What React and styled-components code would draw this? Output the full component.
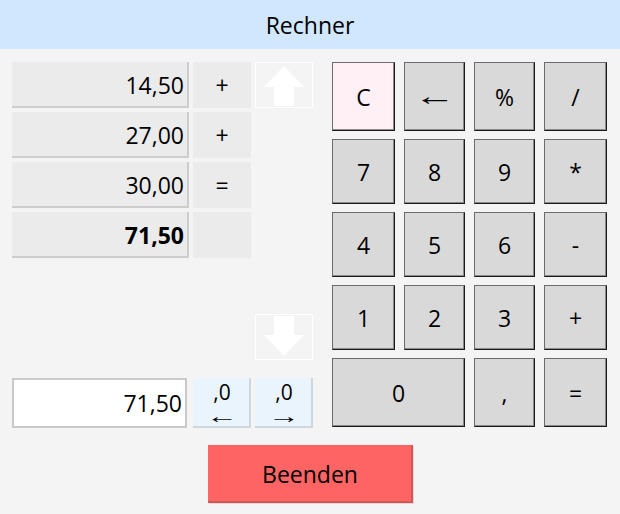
import React from 'react';
import styled, { createGlobalStyle } from 'styled-components';

const GlobalStyle = createGlobalStyle`
  html, body {
    margin: 0;
    padding: 0;
    background: #f4f4f4;
  }
  body {
    font-family: "Open Sans", "Noto Sans", "Liberation Sans", sans-serif;
    color: #000;
  }
`;

const Window = styled.div`
  width: 620px;
  height: 514px;
  display: flex;
  flex-direction: column;
  background: #f4f4f4;
`;

const Header = styled.div`
  height: 49px;
  background: #d1e7fd;
  display: flex;
  align-items: center;
  justify-content: center;
  font-size: 23px;
`;

const Body = styled.div`
  display: flex;
  gap: 19px;
  padding: 13px 12px 0 12px;
`;

const LeftPanel = styled.div`
  display: grid;
  grid-template-columns: 177px 58px 58px;
  grid-template-rows: 46px 46px 46px 46px 48px 46px 10px 50px;
  column-gap: 4px;
  row-gap: 4px;
`;

const ValueCell = styled.div`
  grid-column: 1;
  background: #ebebeb;
  box-shadow: inset -2px -2px 0 #cdcdcd;
  display: flex;
  align-items: center;
  justify-content: flex-end;
  padding-right: 5px;
  font-size: 23px;
  font-weight: ${(p) => (p.$bold ? 700 : 400)};
`;

const OpCell = styled.div`
  grid-column: 2;
  background: #ebebeb;
  display: flex;
  align-items: center;
  justify-content: center;
  font-size: 23px;
`;

const ArrowBox = styled.div`
  grid-column: 3;
  grid-row: ${(p) => p.$row};
  border: 1px solid #ffffff;
  display: flex;
  align-items: center;
  justify-content: center;
`;

const Display = styled.div`
  grid-column: 1;
  grid-row: 8;
  width: 175px;
  box-sizing: border-box;
  background: #fff;
  border: 2px solid #c9c9c9;
  display: flex;
  align-items: center;
  justify-content: flex-end;
  padding-right: 3px;
  font-size: 23px;
`;

const RoundButton = styled.div`
  grid-row: 8;
  grid-column: ${(p) => p.$col};
  background: #eaf4fd;
  box-shadow: inset -2px -2px 0 #cfd6dc;
  display: flex;
  flex-direction: column;
  align-items: center;
  justify-content: flex-start;
  gap: 8px;
  padding-top: 4px;
`;

const RoundLabel = styled.span`
  font-size: 21px;
  line-height: 20px;
`;

const ThinArrow = styled.span`
  display: inline-block;
  font-family: "Liberation Sans", sans-serif;
  font-size: ${(p) => p.$size}px;
  line-height: ${(p) => p.$size * 0.6}px;
  transform: scaleX(1.6);
`;

const Keypad = styled.div`
  display: grid;
  grid-template-columns: 63px 61px 61px 63px;
  grid-template-rows: 69px 65px 65px 65px 69px;
  column-gap: 9px;
  row-gap: 8px;
`;

const Key = styled.button`
  grid-column: span ${(p) => p.$span || 1};
  margin: 0;
  padding: 0;
  font-family: inherit;
  font-size: 23px;
  color: #000;
  background: ${(p) => (p.$clear ? '#fff0f5' : '#d9d9d9')};
  border: 1px solid #6c6c6c;
  border-right-color: #1a1a1a;
  border-bottom-color: #1a1a1a;
  box-shadow: inset -1px -1px 0 #8a8a8a;
  display: flex;
  align-items: center;
  justify-content: center;
`;

const Footer = styled.div`
  display: flex;
  justify-content: center;
  padding-top: 17px;
`;

const QuitButton = styled.button`
  width: 205px;
  height: 58px;
  margin: 0;
  border: none;
  background: #ff6464;
  box-shadow: inset -2px -2px 0 #d55656, 1px 1px 0 #d8d8d8;
  font-family: inherit;
  font-size: 23px;
  color: #000;
`;

function ArrowIcon({ down }) {
  return (
    <svg width="42" height="42" viewBox="0 0 42 42">
      <path
        d="M21 2 L41 23 L31 23 L31 42 L11 42 L11 23 L1 23 Z"
        fill="#ffffff"
        transform={down ? 'rotate(180 21 21)' : undefined}
      />
    </svg>
  );
}

const history = [
  { value: '14,50', op: '+' },
  { value: '27,00', op: '+' },
  { value: '30,00', op: '=' },
  { value: '71,50', op: '', bold: true },
];

const keys = [
  { label: 'C', clear: true },
  { label: '←', arrow: true },
  { label: '%' },
  { label: '/' },
  { label: '7' },
  { label: '8' },
  { label: '9' },
  { label: '*' },
  { label: '4' },
  { label: '5' },
  { label: '6' },
  { label: '-' },
  { label: '1' },
  { label: '2' },
  { label: '3' },
  { label: '+' },
  { label: '0', span: 2 },
  { label: ',' },
  { label: '=' },
];

export default function App() {
  return (
    <>
      <GlobalStyle />
      <Window>
        <Header>Rechner</Header>
        <Body>
          <LeftPanel>
            {history.map((row, i) => (
              <React.Fragment key={i}>
                <ValueCell style={{ gridRow: i + 1 }} $bold={row.bold}>
                  {row.value}
                </ValueCell>
                <OpCell style={{ gridRow: i + 1 }}>{row.op}</OpCell>
              </React.Fragment>
            ))}
            <ArrowBox $row={1}>
              <ArrowIcon />
            </ArrowBox>
            <ArrowBox $row={6}>
              <ArrowIcon down />
            </ArrowBox>
            <Display>71,50</Display>
            <RoundButton $col={2}>
              <RoundLabel>,0</RoundLabel>
              <ThinArrow $size={20}>←</ThinArrow>
            </RoundButton>
            <RoundButton $col={3}>
              <RoundLabel>,0</RoundLabel>
              <ThinArrow $size={20}>→</ThinArrow>
            </RoundButton>
          </LeftPanel>
          <Keypad>
            {keys.map((k) => (
              <Key key={k.label} $span={k.span} $clear={k.clear}>
                {k.arrow ? <ThinArrow $size={26}>{k.label}</ThinArrow> : k.label}
              </Key>
            ))}
          </Keypad>
        </Body>
        <Footer>
          <QuitButton>Beenden</QuitButton>
        </Footer>
      </Window>
    </>
  );
}
